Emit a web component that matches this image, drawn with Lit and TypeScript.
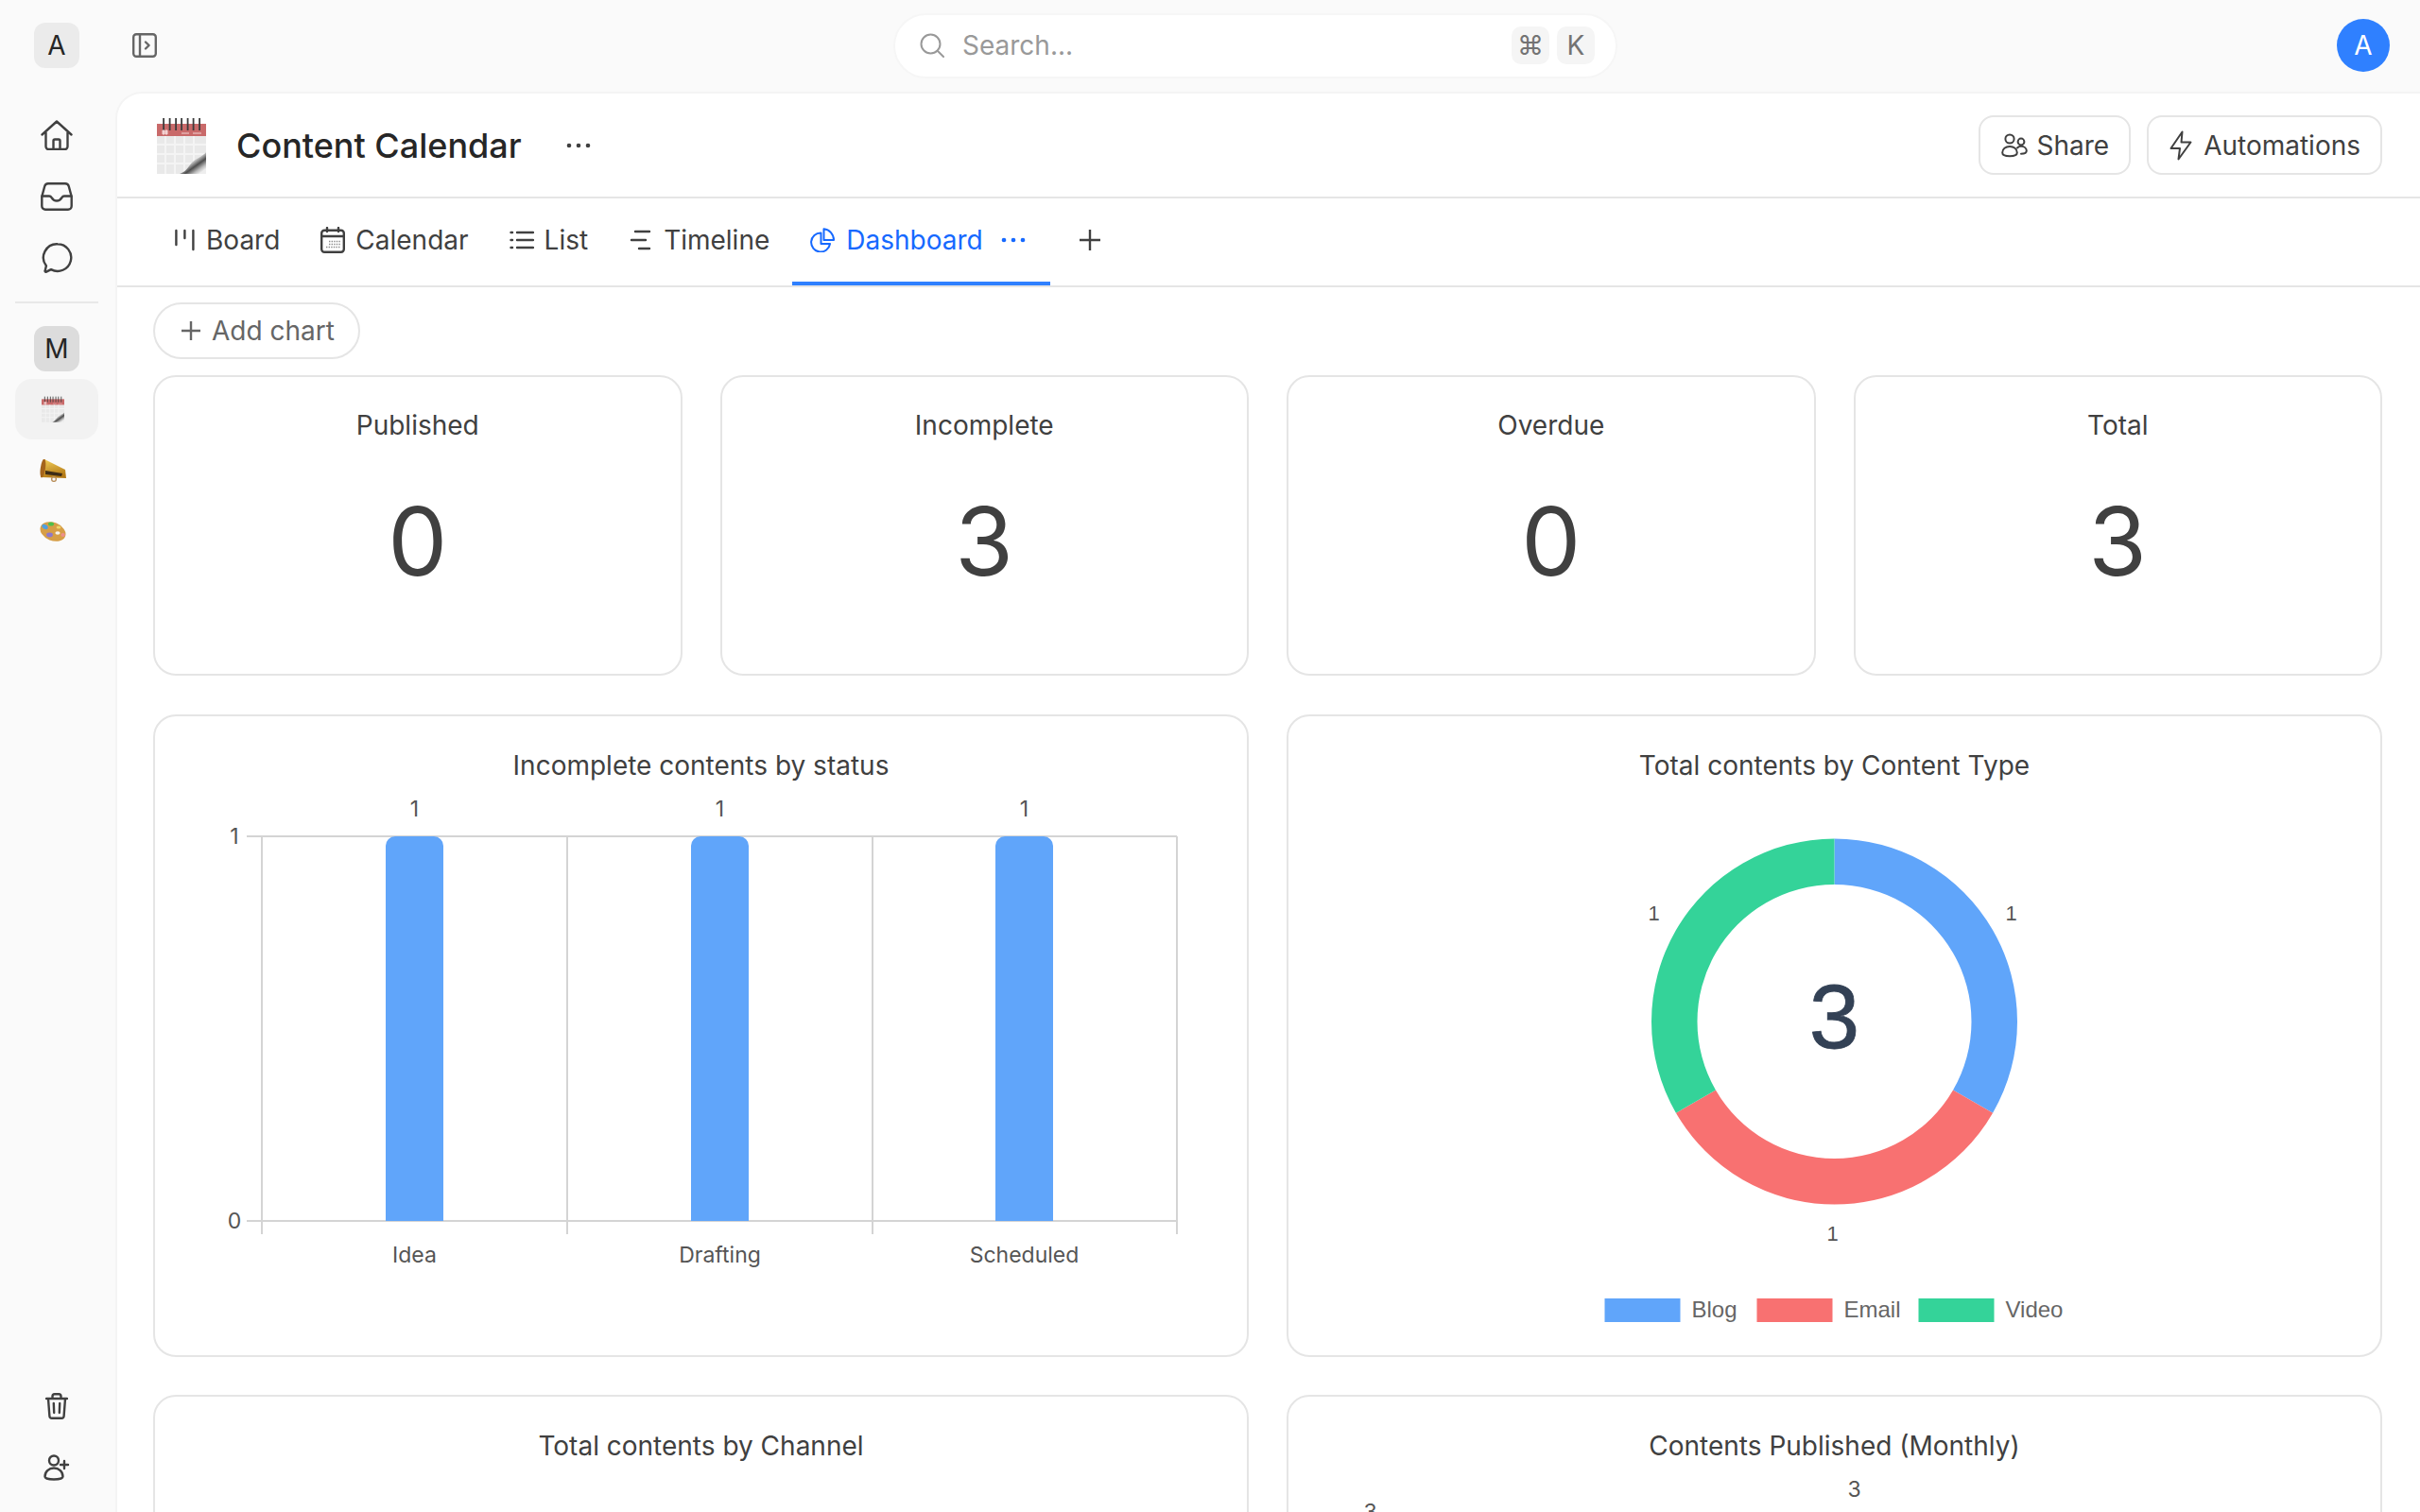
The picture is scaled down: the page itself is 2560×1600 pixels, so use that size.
import { LitElement, css, html, svg } from 'lit';
import { customElement } from 'lit/decorators.js';

const stats = [
  { label: 'Published', value: 0 },
  { label: 'Incomplete', value: 3 },
  { label: 'Overdue', value: 0 },
  { label: 'Total', value: 3 },
];

const bars = [
  { label: 'Idea', x: 408 },
  { label: 'Drafting', x: 731 },
  { label: 'Scheduled', x: 1053 },
];

const slices = [
  { name: 'Blog', color: '#60a5fa', from: 0, to: 120, lx: 2127, ly: 966, sx: 1697, tx: 1789 },
  { name: 'Email', color: '#f87171', from: 120, to: 240, lx: 1938, ly: 1305, sx: 1858, tx: 1950 },
  { name: 'Video', color: '#34d399', from: 240, to: 360, lx: 1749, ly: 966, sx: 2029, tx: 2121 },
];

function arc(cx: number, cy: number, ro: number, ri: number, from: number, to: number) {
  const pt = (r: number, a: number) => {
    const t = ((a - 90) * Math.PI) / 180;
    return `${cx + r * Math.cos(t)} ${cy + r * Math.sin(t)}`;
  };
  return `M${pt(ro, from)} A${ro} ${ro} 0 0 1 ${pt(ro, to)} L${pt(ri, to)} A${ri} ${ri} 0 0 0 ${pt(ri, from)} Z`;
}

const calendarEmoji = (w: number, h: number) => html`
  <svg width=${w} height=${h} viewBox="0 0 52 60">
    <defs>
      <linearGradient id="curl" x1="0.15" y1="0.1" x2="0.85" y2="0.9">
        <stop offset="0" stop-color="#fafafa" />
        <stop offset="0.42" stop-color="#dedede" />
        <stop offset="0.66" stop-color="#4d4d4d" />
        <stop offset="0.86" stop-color="#bbb" />
        <stop offset="1" stop-color="#eee" />
      </linearGradient>
    </defs>
    <rect y="7" width="52" height="53" fill="#e9e9e9" />
    <rect y="7" width="52" height="13" fill="#c96a6a" />
    ${[7, 13.5, 20, 26, 32.5, 38.5, 45].map(
      (x) => svg`<rect x=${x - 0.8} y="1" width="1.8" height="13" fill="#3c3c3c" />`,
    )}
    <path d="M6 18v-4h2v4zm3 0v-4h2v4z M26 17h8 M38 17h9" stroke="#f3d2d2" stroke-width="1" fill="#f3d2d2" />
    <path
      d="M0 29h52M0 39h52M0 49h52M9 20v40M19 20v40M29 20v40M39 20v40"
      stroke="#f4f4f4"
      stroke-width="2"
    />
    <path d="M52 37C48 42 42 43 38 47 33 52 32 57 24 60H52Z" fill="url(#curl)" />
  </svg>
`;

const megaphone = html`
  <svg width="28" height="24" viewBox="0 0 28 24">
    <defs>
      <linearGradient id="gold" x1="0" y1="0" x2="0.3" y2="1">
        <stop offset="0" stop-color="#f4d25c" />
        <stop offset="1" stop-color="#b47a16" />
      </linearGradient>
    </defs>
    <path d="M5 0 L27 11 L28 20 L1 19Z" fill="url(#gold)" />
    <ellipse cx="3.4" cy="9.5" rx="2.6" ry="10" transform="rotate(8 3.4 9.5)" fill="#a5651c" />
    <path d="M6 12 L24 15 L23 18 L6 16Z" fill="#3d2c17" />
    <circle cx="15" cy="21" r="2.4" fill="none" stroke="#b9905c" stroke-width="1.4" />
  </svg>
`;

const palette = html`
  <svg width="28" height="24" viewBox="0 0 28 24">
    <ellipse cx="14" cy="11.5" rx="14" ry="9.6" transform="rotate(22 14 11.5)" fill="#d69e47" />
    <ellipse cx="5.5" cy="6.5" rx="3.4" ry="2.2" transform="rotate(30 5.5 6.5)" fill="#4f9fe0" />
    <ellipse cx="12" cy="3.6" rx="3" ry="2" fill="#4cc04c" />
    <ellipse cx="20" cy="7" rx="2.4" ry="1.5" fill="#efd56a" />
    <ellipse cx="10.5" cy="15" rx="3.4" ry="2.4" fill="#8f78c9" />
    <ellipse cx="19" cy="13" rx="2.6" ry="1.8" fill="#f6f2ea" />
    <ellipse cx="24.6" cy="15" rx="2.2" ry="2" fill="#ee8f8f" />
  </svg>
`;

const ico = {
  toggle: html`<svg width="26" height="26" viewBox="0 0 26 26" class="line soft">
    <rect x="1.2" y="1.2" width="23.6" height="23.6" rx="3" /><path d="M8 1.2v23.6M14 9.5l3.6 3.5-3.6 3.5" />
  </svg>`,
  home: html`<svg width="34" height="32" viewBox="0 0 34 32" class="line">
    <path d="M1.5 15.5 17 1.5l15.5 14M5.500 12v16a3 3 0 0 0 3 3h17a3 3 0 0 0 3-3V12M13.500 31v-9a1.500 1.500 0 0 1 1.500-1.500h4a1.500 1.500 0 0 1 1.500 1.500v9" />
  </svg>`,
  inbox: html`<svg width="34" height="30" viewBox="0 0 34 30" class="line">
    <path d="M8 1.300h18a4 4 0 0 1 3.800 3L32.700 15v10a3.700 3.700 0 0 1-3.700 3.700H5A3.700 3.700 0 0 1 1.300 25V15L4.200 4.300A4 4 0 0 1 8 1.300Z" />
    <path d="M1.500 14.500H9c1.200 0 2 .6 2.600 1.600 1.100 1.900 3 3.400 5.400 3.400s4.300-1.500 5.400-3.400c.6-1 1.400-1.600 2.600-1.600h7.500" />
  </svg>`,
  chat: html`<svg width="34" height="32" viewBox="0 0 34 32" class="line">
    <path d="M18 1.300a14.300 14.300 0 1 1-7 26.800l-5 2.500c-.9.4-1.600-.2-1.300-1.100l1.200-5.200A14.300 14.300 0 0 1 18 1.300Z" />
  </svg>`,
  trash: html`<svg width="24" height="28" viewBox="0 0 24 28" class="line">
    <path d="M1 6h22M3 6l1.400 18.500a2.500 2.500 0 0 0 2.500 2.300h10.200a2.500 2.500 0 0 0 2.500-2.300L21 6M7.500 6V3.500a2.300 2.300 0 0 1 2.300-2.300h4.400a2.300 2.300 0 0 1 2.300 2.300V6M8.800 11l.4 10M15.200 11l-.4 10" />
  </svg>`,
  userPlus: html`<svg width="28" height="28" viewBox="0 0 28 28" class="line">
    <circle cx="11" cy="6.500" r="5" /><path d="M1.500 23.500c0-5.200 4-9 9.500-9s9.500 3.800 9.500 9c0 1.700-4 3-9.500 3s-9.500-1.300-9.500-3ZM22 7v8M18 11h8" />
  </svg>`,
  search: html`<svg width="26" height="26" viewBox="0 0 26 26" class="line faint">
    <circle cx="11.500" cy="11.500" r="10" /><path d="m19 19 6 6" />
  </svg>`,
  share: html`<svg width="28" height="26" viewBox="0 0 28 26" class="line thin">
    <circle cx="9" cy="6" r="4.600" /><circle cx="21" cy="9" r="3.400" />
    <path d="M1.200 20.500c0-4 3.500-6.600 7.800-6.600s7.800 2.600 7.800 6.600c0 2.500-3.500 3.800-7.800 3.800s-7.800-1.300-7.800-3.800Z" />
    <path d="M17 15.500c1-1 2.500-1.700 4-1.700 3.300 0 5.800 2 5.800 4.800 0 2.300-2.800 3.200-5.800 3.200" />
  </svg>`,
  bolt: html`<svg width="24" height="32" viewBox="0 0 24 32" class="line thin">
    <path d="M13.500 1.500 1.500 19h9.500l-1.500 11.500L22.500 12.500h-10l1-11Z" />
  </svg>`,
  board: html`<svg width="22" height="24" viewBox="0 0 22 24" class="line">
    <path d="M1.400 2v15M10.400 2v8M19.400 2v20" />
  </svg>`,
  calendar: html`<svg width="26" height="28" viewBox="0 0 26 28" class="line">
    <rect x="1.200" y="3.800" width="23.600" height="23" rx="3" /><path d="M1.200 10h23.600M7 1v4M19 1v4" />
    <path d="M9 15.500h12M9 18.500h12M6 21.500h15" stroke="#8a8a8a" stroke-dasharray="1.400 1.200" stroke-width="1.400" stroke-linecap="butt" />
  </svg>`,
  list: html`<svg width="26" height="22" viewBox="0 0 26 22" class="line">
    <path d="M8 3h17M8 11h17M8 19h17" /><path d="M1.500 3h1.500M1.500 11h1.500M1.500 19h1.500" />
  </svg>`,
  timeline: html`<svg width="26" height="24" viewBox="-2 0 26 24" class="line">
    <path d="M5 3h15M1 12h15M9 21h11" />
  </svg>`,
  pie: html`<svg width="26" height="26" viewBox="0 0 26 26" class="line blue thin">
    <path d="M11.500 5.500A10 10 0 1 0 21 17H11.500Z" /><path d="M14.500 1.200V13H25A11.800 11.800 0 0 0 14.500 1.200Z" />
  </svg>`,
  plus: html`<svg width="22" height="22" viewBox="0 0 22 22" class="line">
    <path d="M11 0v22M0 11h22" />
  </svg>`,
  smallPlus: html`<svg width="20" height="20" viewBox="0 0 20 20" class="line soft">
    <path d="M10 0v20M0 10h20" />
  </svg>`,
};

const dots = () => html`<svg width="26" height="6" viewBox="0 0 26 6" class="dots">
  <circle cx="3" cy="3" r="2.300" fill="currentColor" /><circle cx="13" cy="3" r="2.300" fill="currentColor" /><circle cx="23" cy="3" r="2.300" fill="currentColor" />
</svg>`;

@customElement('app-root')
export class AppRoot extends LitElement {
  static styles = css`
    :host {
      display: flex;
      flex-direction: column;
      height: 1600px;
      width: 2560px;
      overflow: hidden;
      background: #fafafa;
      color: #404040;
      font-family: Inter, 'Liberation Sans', sans-serif;
      font-size: 28px;
    }
    .line {
      fill: none;
      stroke: #404040;
      stroke-width: 2.4;
      stroke-linecap: round;
      stroke-linejoin: round;
      flex: none;
    }
    .line.thin {
      stroke-width: 2;
    }
    .line.soft {
      stroke: #666;
    }
    .line.faint {
      stroke: #999;
      stroke-width: 2;
    }
    .line.blue {
      stroke: #1669ff;
    }
    .topbar {
      height: 97px;
      flex: none;
      box-sizing: border-box;
      padding-bottom: 1px;
      display: grid;
      grid-template-columns: 945px 766px 1fr;
      align-items: center;
    }
    .top-left {
      display: flex;
      align-items: center;
      gap: 56px;
      padding-left: 36px;
    }
    .square {
      width: 48px;
      height: 48px;
      border-radius: 12px;
      background: #ebebeb;
      display: flex;
      align-items: center;
      justify-content: center;
      color: #262626;
      font-size: 28px;
    }
    .square.m {
      background: #dcdcdc;
      margin: 24px 0 8px 20px;
    }
    .search {
      height: 69px;
      box-sizing: border-box;
      border-radius: 35px;
      background: #fff;
      border: 2px solid #f6f6f6;
      display: flex;
      align-items: center;
      padding: 0 22px 0 26px;
      color: #999;
    }
    .search span.ph {
      margin-left: 19px;
      flex: 1;
    }
    .kbd {
      width: 40px;
      height: 40px;
      border-radius: 10px;
      background: #f5f5f5;
      color: #737373;
      font-size: 28px;
      display: flex;
      align-items: center;
      justify-content: center;
      margin-left: 8px;
    }
    .avatar {
      justify-self: end;
      margin-right: 32px;
      width: 56px;
      height: 56px;
      border-radius: 50%;
      background: #2f80ff;
      color: #fff;
      display: flex;
      align-items: center;
      justify-content: center;
      font-size: 28px;
    }
    .body {
      flex: 1;
      display: flex;
      min-height: 0;
    }
    .sidebar {
      width: 122px;
      flex: none;
      box-sizing: border-box;
      padding: 14px 18px 14px 16px;
      display: flex;
      flex-direction: column;
    }
    .nav {
      height: 64px;
      margin-bottom: 1px;
      display: flex;
      align-items: center;
      justify-content: center;
      flex: none;
    }
    .divider {
      height: 2px;
      background: #e8e8e8;
      margin-top: 13px;
      flex: none;
    }
    .space {
      height: 64px;
      margin-bottom: 1px;
      display: flex;
      align-items: center;
      padding-left: 26px;
      border-radius: 18px;
      flex: none;
    }
    .space.on {
      background: #f2f2f2;
      padding-left: 28px;
    }
    .push {
      margin-top: auto;
    }
    .panel {
      flex: 1;
      min-width: 0;
      background: #fff;
      border-top-left-radius: 28px;
      border-top: 2px solid #f4f4f4;
      border-left: 2px solid #f4f4f4;
      overflow: hidden;
    }
    .head {
      height: 111px;
      box-sizing: border-box;
      border-bottom: 2px solid #e5e5e5;
      display: flex;
      align-items: center;
      padding: 0 40px 0 42px;
    }
    .head h1 {
      margin: 0 47px 0 32px;
      font-size: 36px;
      font-weight: 500;
      color: #262626;
    }
    .btns {
      margin-left: auto;
      display: flex;
      gap: 17px;
    }
    .btn {
      height: 63px;
      box-sizing: border-box;
      border: 2px solid #e5e5e5;
      border-radius: 16px;
      padding: 0 21px 0 22px;
      display: flex;
      align-items: center;
      gap: 9px;
    }
    .btn.wide {
      gap: 12px;
    }
    .tabs {
      height: 94px;
      box-sizing: border-box;
      border-bottom: 2px solid #e5e5e5;
      display: flex;
      align-items: stretch;
      gap: 5px;
      padding-left: 42px;
    }
    .tab {
      display: flex;
      align-items: center;
      gap: 11px;
      padding: 0 19px 4px;
    }
    .tab.on {
      color: #1669ff;
      box-shadow: inset 0 -4px 0 #2f80ff;
      gap: 12px;
      padding-right: 26px;
    }
    .tab .dots {
      margin-left: 7px;
    }
    .tab-add {
      display: flex;
      align-items: center;
      margin-left: 26px;
      padding-bottom: 4px;
    }
    .content {
      padding: 16px 40px 0 38px;
    }
    .add {
      display: inline-flex;
      align-items: center;
      gap: 12px;
      height: 60px;
      box-sizing: border-box;
      border: 2px solid #e5e5e5;
      border-radius: 30px;
      padding: 0 25px 0 28px;
      color: #666;
      vertical-align: top;
    }
    .stats {
      display: grid;
      grid-template-columns: repeat(4, 1fr);
      gap: 40px;
      margin-top: 17px;
    }
    .card {
      box-sizing: border-box;
      border: 2px solid #e5e5e5;
      border-radius: 24px;
      text-align: center;
    }
    .stat {
      height: 318px;
      padding-top: 35px;
    }
    .stat div {
      line-height: 32px;
      color: #404040;
    }
    .stat strong {
      display: block;
      font-weight: 400;
      font-size: 100px;
      line-height: 100px;
      margin-top: 57px;
      color: #404040;
    }
    .charts {
      display: grid;
      grid-template-columns: 1fr 1fr;
      gap: 40px;
      margin-top: 41px;
    }
    .chart {
      height: 680px;
      padding-top: 36px;
    }
    .chart .title {
      line-height: 32px;
      color: #404040;
    }
    .chart svg {
      display: block;
    }
    .axis {
      font-family: Inter, sans-serif;
      font-size: 23px;
      fill: #555;
      text-anchor: middle;
      dominant-baseline: central;
    }
    .helv {
      font-family: 'Liberation Sans', sans-serif;
      font-size: 24px;
      fill: #666;
      dominant-baseline: central;
    }
    .helv.tick {
      font-size: 22px;
      fill: #555;
      text-anchor: middle;
    }
    .center3 {
      font-family: 'Liberation Sans', sans-serif;
      font-size: 96px;
      fill: #334155;
      stroke: #334155;
      stroke-width: 0.8;
      text-anchor: middle;
      dominant-baseline: central;
    }
  `;

  private renderBars() {
    return html`<svg width="1155" height="604" viewBox="164 826 1155 604">
      <g stroke="#d4d4d4" stroke-width="2" fill="none">
        <path d="M261 885H1245M261 1292H1245" />
        <path d="M277 885V1306M600 885V1306M923 885V1306M1245 885V1306" />
      </g>
      ${bars.map(
        (b) => svg`
          <path d="M${b.x} 1292V895a10 10 0 0 1 10-10h41a10 10 0 0 1 10 10V1292Z" fill="#60a5fa" />
          <text class="axis" x=${b.x + 30.5} y="856">1</text>
          <text class="axis" x=${b.x + 30.5} y="1328">${b.label}</text>
        `,
      )}
      <text class="axis" x="248" y="885">1</text>
      <text class="axis" x="248" y="1292">0</text>
    </svg>`;
  }

  private renderDonut() {
    return html`<svg width="1155" height="604" viewBox="1362.5 826 1155 604">
      ${slices.map(
        (s) => svg`
          <path d=${arc(1940, 1081, 193.5, 145, s.from, s.to)} fill=${s.color} />
          <text class="helv tick" x=${s.lx} y=${s.ly}>1</text>
          <rect x=${s.sx} y="1374" width="80" height="25" fill=${s.color} />
          <text class="helv" x=${s.tx} y="1385">${s.name}</text>
        `,
      )}
      <text class="center3" x="1940" y="1075">3</text>
    </svg>`;
  }

  render() {
    return html`
      <div class="topbar">
        <div class="top-left">
          <div class="square">A</div>
          ${ico.toggle}
        </div>
        <div class="search">
          ${ico.search}
          <span class="ph">Search...</span>
          <span class="kbd">⌘</span>
          <span class="kbd">K</span>
        </div>
        <div class="avatar">A</div>
      </div>
      <div class="body">
        <nav class="sidebar">
          <div class="nav">${ico.home}</div>
          <div class="nav">${ico.inbox}</div>
          <div class="nav">${ico.chat}</div>
          <div class="divider"></div>
          <div class="square m">M</div>
          <div class="space on">${calendarEmoji(24, 28)}</div>
          <div class="space">${megaphone}</div>
          <div class="space">${palette}</div>
          <div class="nav push">${ico.trash}</div>
          <div class="nav">${ico.userPlus}</div>
        </nav>
        <main class="panel">
          <header class="head">
            ${calendarEmoji(52, 60)}
            <h1>Content Calendar</h1>
            ${dots()}
            <div class="btns">
              <div class="btn">${ico.share}Share</div>
              <div class="btn wide">${ico.bolt}Automations</div>
            </div>
          </header>
          <div class="tabs">
            <div class="tab">${ico.board}Board</div>
            <div class="tab">${ico.calendar}Calendar</div>
            <div class="tab">${ico.list}List</div>
            <div class="tab">${ico.timeline}Timeline</div>
            <div class="tab on">${ico.pie}Dashboard${dots()}</div>
            <div class="tab-add">${ico.plus}</div>
          </div>
          <div class="content">
            <div class="add">${ico.smallPlus}Add chart</div>
            <div class="stats">
              ${stats.map(
                (s) => html`<div class="card stat">
                  <div>${s.label}</div>
                  <strong>${s.value}</strong>
                </div>`,
              )}
            </div>
            <div class="charts">
              <div class="card chart">
                <div class="title">Incomplete contents by status</div>
                ${this.renderBars()}
              </div>
              <div class="card chart">
                <div class="title">Total contents by Content Type</div>
                ${this.renderDonut()}
              </div>
              <div class="card chart">
                <div class="title">Total contents by Channel</div>
              </div>
              <div class="card chart">
                <div class="title">Contents Published (Monthly)</div>
                <svg width="1155" height="60" viewBox="1362.5 1546 1155 60">
                  <text class="axis" x="1961" y="1576">3</text>
                  <text class="axis" x="1449" y="1600">3</text>
                </svg>
              </div>
            </div>
          </div>
        </main>
      </div>
    `;
  }
}
